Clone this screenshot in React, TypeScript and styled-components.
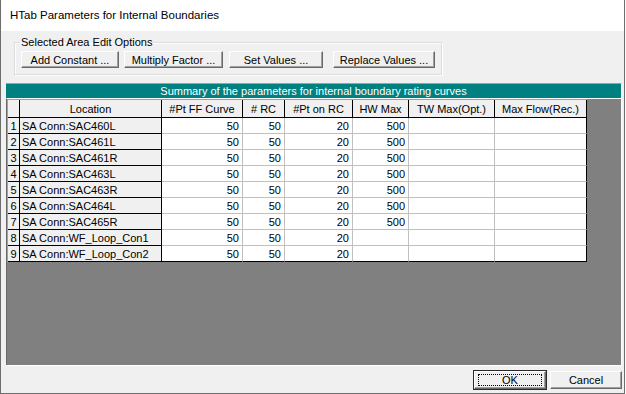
import React from "react";
import styled, { createGlobalStyle } from "styled-components";

const GlobalStyle = createGlobalStyle`
  html, body {
    margin: 0;
    padding: 0;
    background: #ffffff;
  }
  * {
    box-sizing: border-box;
  }
`;

const Window = styled.div`
  width: 625px;
  height: 394px;
  display: flex;
  flex-direction: column;
  border-left: 1px solid #6d6d6d;
  border-right: 1px solid #6d6d6d;
  border-bottom: 1px solid #6d6d6d;
  font-family: "Liberation Sans", Arial, sans-serif;
  font-size: 11px;
  color: #000;
  overflow: hidden;
`;

const TitleBar = styled.div`
  height: 31px;
  flex: none;
  background: #ffffff;
  padding-left: 9px;
  font-size: 11.5px;
  line-height: 31px;
  color: #000;
`;

const Body = styled.div`
  flex: 1;
  background: #f0f0f0;
  display: flex;
  flex-direction: column;
`;

const GroupBox = styled.fieldset`
  margin: 4px 0 0 13px;
  width: 428px;
  padding: 2px 6px 6px 6px;
  border: 1px solid #dcdcdc;
  box-shadow: inset 1px 1px #ffffff, 1px 1px #ffffff;
  min-inline-size: 0;
`;

const Legend = styled.legend`
  padding: 0 1px;
  margin-left: -1px;
  line-height: 14px;
  font-size: 11px;
`;

const ButtonRow = styled.div`
  display: flex;
  align-items: center;
`;

const Button = styled.button<{ $width: number; $gap?: number; $default?: boolean }>`
  width: ${(p) => p.$width}px;
  height: ${(p) => (p.$default ? 18 : 17)}px;
  margin: 0 0 0 ${(p) => p.$gap ?? 0}px;
  padding: 0;
  background: #f0f0f0;
  font-family: "Liberation Sans", Arial, sans-serif;
  font-size: 11px;
  color: #000;
  border: 1px solid;
  border-color: #ffffff #696969 #696969 #ffffff;
  box-shadow: inset -1px -1px #a0a0a0;
  outline: ${(p) => (p.$default ? "1px solid #2b2b2b" : "none")};
  outline-offset: 0;
  display: flex;
  align-items: center;
  justify-content: center;
  position: relative;
`;

const FocusRect = styled.span`
  position: absolute;
  left: 3px;
  right: 3px;
  top: 2px;
  bottom: 2px;
  border: 1px dotted #000;
`;

const Panel = styled.div`
  margin: 8px 0 0 5px;
  width: 616px;
  border-top: 1px solid #a0a0a0;
  border-right: 1px solid #ffffff;
  border-bottom: 1px solid #ffffff;
  display: flex;
  flex-direction: column;
`;

const Caption = styled.div`
  height: 14px;
  background: #008080;
  color: #ffffff;
  text-align: center;
  line-height: 14px;
  font-size: 11px;
`;

const GridArea = styled.div`
  height: 267px;
  background: #808080;
  border-top: 1px solid #ffffff;
  border-left: 1px solid #696969;
`;

const Table = styled.div`
  display: grid;
  grid-template-columns: 12px 142px 81px 42px 68px 56px 86px 92px;
  grid-template-rows: 18px;
  grid-auto-rows: 16px;
  width: 580px;
  border-top: 1px solid #a0a0a0;
  border-left: 1px solid #a0a0a0;
`;

type CellKind = "head" | "fixed" | "data";

const Cell = styled.div<{
  $kind: CellKind;
  $align?: "left" | "center" | "right";
  $lastCol?: boolean;
  $lastRow?: boolean;
}>`
  display: flex;
  align-items: center;
  justify-content: ${(p) =>
    p.$align === "right" ? "flex-end" : p.$align === "center" ? "center" : "flex-start"};
  padding: ${(p) => (p.$align === "right" ? "0 3px 0 0" : p.$align === "left" ? "0 0 0 2px" : "0")};
  background: ${(p) => (p.$kind === "data" ? "#ffffff" : "#f0f0f0")};
  border-right: 1px solid
    ${(p) => (p.$kind === "data" && !p.$lastCol ? "#c0c0c0" : "#000000")};
  border-bottom: 1px solid
    ${(p) => (p.$kind === "data" && !p.$lastRow ? "#c0c0c0" : "#000000")};
  white-space: nowrap;
  overflow: hidden;
  font-size: 11px;
`;

const Footer = styled.div`
  display: flex;
  justify-content: flex-end;
  gap: 4px;
  padding: 5px 2px 0 0;
`;

const headers = [
  "",
  "Location",
  "#Pt FF Curve",
  "# RC",
  "#Pt on RC",
  "HW Max",
  "TW Max(Opt.)",
  "Max Flow(Rec.)",
];

const rows: string[][] = [
  ["SA Conn:SAC460L", "50", "50", "20", "500"],
  ["SA Conn:SAC461L", "50", "50", "20", "500"],
  ["SA Conn:SAC461R", "50", "50", "20", "500"],
  ["SA Conn:SAC463L", "50", "50", "20", "500"],
  ["SA Conn:SAC463R", "50", "50", "20", "500"],
  ["SA Conn:SAC464L", "50", "50", "20", "500"],
  ["SA Conn:SAC465R", "50", "50", "20", "500"],
  ["SA Conn:WF_Loop_Con1", "50", "50", "20", ""],
  ["SA Conn:WF_Loop_Con2", "50", "50", "20", ""],
];

const editButtons = [
  { label: "Add Constant ...", width: 98, gap: 0 },
  { label: "Multiply Factor ...", width: 99, gap: 5 },
  { label: "Set Values ...", width: 94, gap: 6 },
  { label: "Replace Values ...", width: 102, gap: 10 },
];

export default function App() {
  return (
    <>
      <GlobalStyle />
      <Window>
        <TitleBar>HTab Parameters for Internal Boundaries</TitleBar>
        <Body>
          <GroupBox>
            <Legend>Selected Area Edit Options</Legend>
            <ButtonRow>
              {editButtons.map((b) => (
                <Button key={b.label} $width={b.width} $gap={b.gap}>
                  {b.label}
                </Button>
              ))}
            </ButtonRow>
          </GroupBox>

          <Panel>
            <Caption>Summary of the parameters for internal boundary rating curves</Caption>
            <GridArea>
              <Table>
                {headers.map((h, i) => (
                  <Cell key={"h" + i} $kind="head" $align="center">
                    {h}
                  </Cell>
                ))}
                {rows.map((r, ri) => {
                  const lastRow = ri === rows.length - 1;
                  const values = [r[1], r[2], r[3], r[4], "", ""];
                  return (
                    <React.Fragment key={ri}>
                      <Cell $kind="fixed" $align="center">
                        {ri + 1}
                      </Cell>
                      <Cell $kind="fixed" $align="left">
                        {r[0]}
                      </Cell>
                      {values.map((v, ci) => (
                        <Cell
                          key={ci}
                          $kind="data"
                          $align="right"
                          $lastCol={ci === values.length - 1}
                          $lastRow={lastRow}
                        >
                          {v}
                        </Cell>
                      ))}
                    </React.Fragment>
                  );
                })}
              </Table>
            </GridArea>
          </Panel>

          <Footer>
            <Button $width={72} $default>
              <FocusRect />
              OK
            </Button>
            <Button $width={72} style={{ height: 18 }}>
              Cancel
            </Button>
          </Footer>
        </Body>
      </Window>
    </>
  );
}
